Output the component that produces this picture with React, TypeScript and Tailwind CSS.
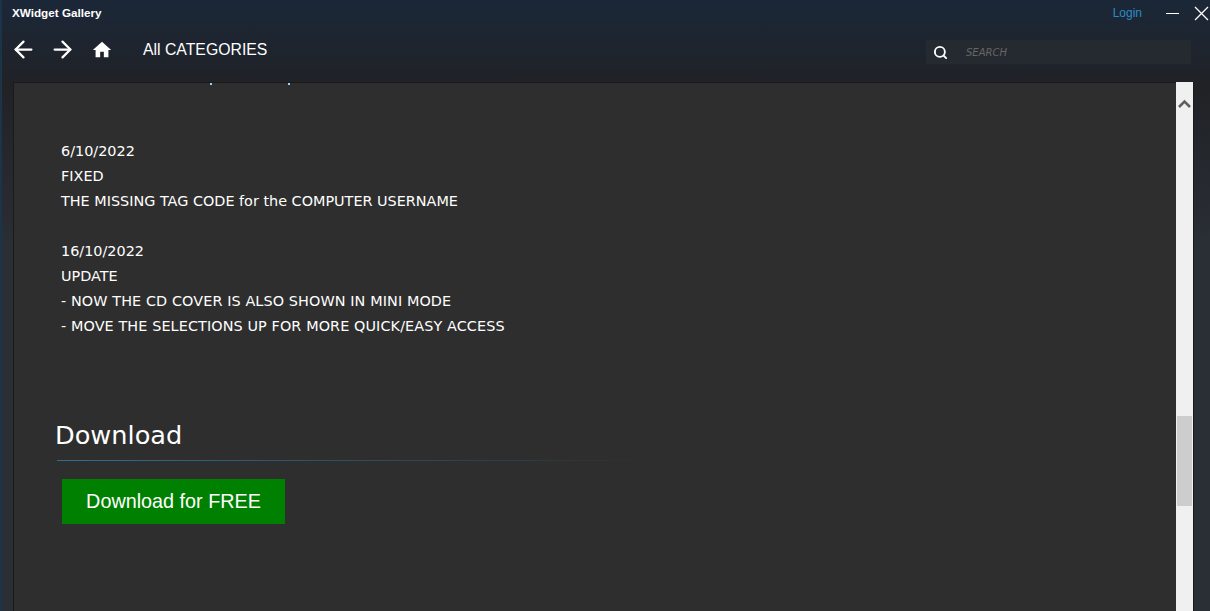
import { ArrowLeft, ArrowRight, Search } from 'lucide-react'

const LINES = [
  '6/10/2022',
  'FIXED',
  'THE MISSING TAG CODE for the COMPUTER USERNAME',
  '',
  '16/10/2022',
  'UPDATE',
  '- NOW THE CD COVER IS ALSO SHOWN IN MINI MODE',
  '- MOVE THE SELECTIONS UP FOR MORE QUICK/EASY ACCESS',
]

export default function App() {
  return (
    <div className="h-[611px] w-[1210px] overflow-hidden flex flex-col border-l-2 border-[#1c3448] bg-gradient-to-b from-[#1b2738] via-[#202226] via-[14%] to-[#2a2e35] to-[40%] text-white font-['DejaVu_Sans',sans-serif]">
      {/* Title bar */}
      <div className="h-[27px] flex items-center pl-[10px] pr-px shrink-0">
        <span className="mb-[2px] text-[11.7px] font-bold font-['Liberation_Sans',sans-serif]">XWidget Gallery</span>
        <span className="ml-auto mb-[2px] text-xs text-[#2a8cc4] font-['Liberation_Sans',sans-serif]">Login</span>
        <div className="ml-[24px] w-[13px] h-[1px] bg-white" />
        <svg viewBox="0 0 15 15" className="ml-[15px] w-[15px] h-[15px] stroke-white fill-none stroke-[1.3]">
          <path d="M1 1l13 13M14 1L1 14" />
        </svg>
      </div>

      {/* Nav */}
      <div className="h-[55px] shrink-0 flex items-center pl-[8px] pb-[10px]">
        <ArrowLeft size={27} strokeWidth={2} />
        <ArrowRight size={27} strokeWidth={2} className="ml-[12px]" />
        <svg viewBox="0 0 24 24" className="ml-[15px] w-[22px] h-[22px] fill-white">
          <path d="M10 20v-6h4v6h5v-8h3L12 3 2 12h3v8z" />
        </svg>
        <span className="ml-[30px] text-[15.8px] font-['Liberation_Sans',sans-serif]">All CATEGORIES</span>
        <div className="ml-auto mr-[19px] mt-[5px] w-[265px] h-6 flex items-center bg-[#252a31] pl-[7px]">
          <Search size={15} strokeWidth={3} />
          <span className="ml-[18px] text-[10px] italic text-[#666]">SEARCH</span>
        </div>
      </div>

      {/* Body */}
      <div className="flex-1 min-h-0 flex pl-[11px] pr-[16px]">
        <div className="relative flex-1 border-l border-t border-[#1a1a1a] bg-[#2e2e2e] pt-[56px] pl-[47px] overflow-hidden">
          {/* tails of the scrolled-off line */}
          <span className="absolute left-[196px] top-0 w-[2px] h-[2px] bg-[#9fd0ff]" />
          <span className="absolute left-[274px] top-0 w-[2px] h-[2px] bg-[#9fd0ff]" />
          <div className="text-[14.4px] leading-[25px] text-white">
            {LINES.map((line, i) => (
              <div key={i} className={line.startsWith('-') ? 'h-[25px] tracking-[0.1px]' : 'h-[25px]'}>{line}</div>
            ))}
          </div>
          <h2 className="mt-[78px] -ml-[6px] text-[25.6px] leading-[36px]">Download</h2>
          <div className="mt-[7px] -ml-[4px] w-[590px] h-px bg-gradient-to-r from-[#2f6f94] to-transparent" />
          <button className="mt-[18px] ml-px pt-px w-[223px] h-[45px] bg-[#008000] text-[19.8px] font-['Liberation_Sans',sans-serif]">Download for FREE</button>
        </div>

        {/* Scrollbar */}
        <div className="w-[18px] bg-[#f0f0f0] border-r border-[#1a1a1a] flex flex-col items-center pt-[17px]">
          <svg viewBox="0 0 13 9" className="w-[13px] h-[9px] fill-none stroke-[#606060] stroke-[2.6]">
            <path d="M1 8l5.5-5.5L12 8" />
          </svg>
          <div className="mt-[308px] w-[15px] h-[90px] bg-[#cdcdcd]" />
        </div>
      </div>
    </div>
  )
}
